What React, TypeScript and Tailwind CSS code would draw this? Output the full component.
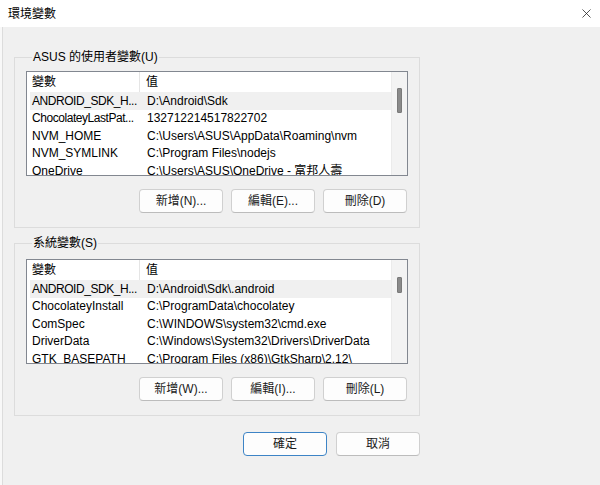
import { X } from "lucide-react"

type Row = { name: string; value: string }

// names are shown the way the list view clips them
const userVars: Row[] = [
  { name: "ANDROID_SDK_H...", value: "D:\\Android\\Sdk" },
  { name: "ChocolateyLastPat...", value: "132712214517822702" },
  { name: "NVM_HOME", value: "C:\\Users\\ASUS\\AppData\\Roaming\\nvm" },
  { name: "NVM_SYMLINK", value: "C:\\Program Files\\nodejs" },
  { name: "OneDrive", value: "C:\\Users\\ASUS\\OneDrive - 富邦人壽" },
]

const systemVars: Row[] = [
  { name: "ANDROID_SDK_H...", value: "D:\\Android\\Sdk\\.android" },
  { name: "ChocolateyInstall", value: "C:\\ProgramData\\chocolatey" },
  { name: "ComSpec", value: "C:\\WINDOWS\\system32\\cmd.exe" },
  { name: "DriverData", value: "C:\\Windows\\System32\\Drivers\\DriverData" },
  { name: "GTK_BASEPATH", value: "C:\\Program Files (x86)\\GtkSharp\\2.12\\" },
]

function Button({ label, primary }: { label: string; primary?: boolean }) {
  return (
    <button
      className={
        primary
          ? "w-[84px] h-[24px] rounded-[4px] border border-[#3d84c6] bg-[#fdfdfd] text-[12px] text-[#1a1a1a]"
          : "w-[84px] h-[24px] rounded-[4px] border border-[#d0d0d0] border-b-[#bcbcbc] bg-[#fdfdfd] text-[12px] text-[#1a1a1a]"
      }
    >
      {label}
    </button>
  )
}

function VarList({ rows, thumbTop, thumbHeight }: { rows: Row[]; thumbTop: string; thumbHeight: string }) {
  return (
    <div className="flex w-[382px] h-[105px] border border-[#828790] bg-white overflow-hidden">
      <div className="flex-1 flex flex-col overflow-hidden pl-[3px]">
        <div className="flex h-[20px] shrink-0 items-center">
          <div className="w-[110px] h-full flex items-center pl-[2px] border-r border-[#e5e5e5]">變數</div>
          <div className="flex-1 pl-[6px]">值</div>
        </div>
        {rows.map((row, i) => (
          <div key={row.name} className={`flex h-[17.5px] shrink-0 items-center ${i === 0 ? "bg-[#f0f0f0]" : ""}`}>
            <div
              className={`w-[110px] pl-[2px] whitespace-nowrap overflow-hidden ${
                row.name.endsWith("...") ? "tracking-[-0.45px]" : ""
              }`}
            >
              {row.name}
            </div>
            <div className="flex-1 pl-[7px] whitespace-nowrap overflow-hidden">{row.value}</div>
          </div>
        ))}
      </div>
      <div className="w-[16px] shrink-0 bg-[#f3f3f3] border-l border-[#ebebeb] flex flex-col items-center">
        <div className={`${thumbTop} ${thumbHeight} w-[5px] bg-[#8a8a8a] border border-[#7a7a7a] rounded-[1px]`} />
      </div>
    </div>
  )
}

function Group({
  title,
  rows,
  buttons,
  thumbTop,
  thumbHeight,
  topGap,
}: {
  title: string
  rows: Row[]
  buttons: string[]
  thumbTop: string
  thumbHeight: string
  topGap: string
}) {
  return (
    <fieldset className="w-[406px] border border-[#dcdcdc] px-[11px] pb-[14px]">
      <legend className="ml-[6px] px-[1px] h-[16px] leading-[16px]">{title}</legend>
      <div className={topGap}>
        <VarList rows={rows} thumbTop={thumbTop} thumbHeight={thumbHeight} />
      </div>
      <div className="flex justify-end gap-[8px] mt-[13px] pr-[1px]">
        {buttons.map((b) => (
          <Button key={b} label={b} />
        ))}
      </div>
    </fieldset>
  )
}

export default function App() {
  return (
    <div
      className="w-[600px] h-[485px] flex flex-col bg-[#f0f0f0] text-[12px] text-black overflow-hidden"
      style={{ fontFamily: '"Liberation Sans", "Noto Sans CJK TC", sans-serif' }}
    >
      <div className="h-[27px] shrink-0 bg-white flex items-center justify-between pl-[8px] pr-[6px]">
        <span>環境變數</span>
        <X size={15} strokeWidth={1.2} className="text-[#1a1a1a]" />
      </div>
      <div className="flex-1 flex flex-col pl-[12px] border-l-2 border-[#f8f8f8]">
        <div className="flex-1 flex flex-col border-l border-[#dcdcdc] -ml-[12px] pl-[11px]">
          <div className="mt-[22px]">
            <Group
              title="ASUS 的使用者變數(U)"
              rows={userVars}
              buttons={["新增(N)...", "編輯(E)...", "刪除(D)"]}
              thumbTop="mt-[16px]"
              thumbHeight="h-[25px]"
              topGap="pt-[6px]"
            />
          </div>
          <div className="mt-[7px]">
            <Group
              title="系統變數(S)"
              rows={systemVars}
              buttons={["新增(W)...", "編輯(I)...", "刪除(L)"]}
              thumbTop="mt-[17px]"
              thumbHeight="h-[16px]"
              topGap="pt-[8px]"
            />
          </div>
          <div className="flex gap-[9px] w-[406px] justify-end mt-[16px]">
            <Button label="確定" primary />
            <Button label="取消" />
          </div>
        </div>
      </div>
    </div>
  )
}
